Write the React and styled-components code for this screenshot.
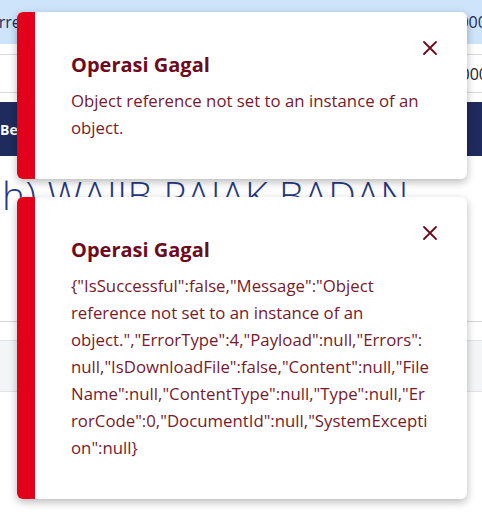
// Packages
import React from "react"
import styled, { createGlobalStyle } from "styled-components"

// Styles
const GlobalStyle = createGlobalStyle`
    html, body {
        margin: 0;
        padding: 0;
        background: #ffffff;
    }

    body {
        font-family: "Open Sans", "Noto Sans", sans-serif;
    }
`

const Page = styled.div`
    position: relative;
    width: 482px;
    height: 514px;
    overflow: hidden;
    background: #ffffff;
`

const TopBar = styled.div`
    height: 44px;
    background: #cde4fb;
    display: flex;
    justify-content: space-between;
    align-items: center;
    color: #1f2b5c;
    font-size: 16px;
    white-space: nowrap;
    overflow: hidden;

    span:first-child {
        margin-left: -21px;
    }

    span:last-child {
        margin-right: -14px;
        text-transform: uppercase;
    }
`

const FieldRow = styled.div`
    margin-top: 10px;
    height: 37px;
    border-top: 1px solid #d6dae0;
    border-bottom: 1px solid #d6dae0;
    display: flex;
    align-items: center;
    justify-content: flex-end;
    font-size: 16px;
    color: #222;
    overflow: hidden;

    span {
        margin-right: -6px;
    }
`

const NavBand = styled.div`
    margin-top: 9px;
    height: 54px;
    background: #1f2b5c;
    display: flex;
    align-items: center;
    color: #ffffff;
    font-size: 14px;
    font-weight: 700;
    white-space: nowrap;
`

const Heading = styled.h2`
    margin: 17px 0 0 2px;
    font-size: 39px;
    font-weight: 300;
    letter-spacing: 0.6px;
    line-height: 44px;
    color: #253883;
    white-space: nowrap;
`

const Divider = styled.div`
    margin-top: 104px;
    height: 1px;
    background: #d3d7dc;
`

const GrayBand = styled.div`
    margin-top: 18px;
    height: 50px;
    background: #f4f5f7;
    border-top: 1px solid #dfe2e6;
    border-bottom: 1px solid #dfe2e6;
`

const ToastStack = styled.div`
    position: absolute;
    top: 12px;
    left: 17px;
    width: 450px;
    display: flex;
    flex-direction: column;
    gap: 18px;
`

const Toast = styled.div`
    position: relative;
    display: flex;
    background: #ffffff;
    border-radius: 6px;
    overflow: hidden;
    box-shadow: 0 3px 8px rgba(0, 0, 0, 0.28);
`

const Bar = styled.div`
    flex: 0 0 18px;
    background: #e3001b;
`

const Content = styled.div`
    flex: 1;
    min-width: 0;
    padding: 40px 36px 38px 36px;
`

const Title = styled.h3`
    margin: 0;
    font-size: 20px;
    line-height: 26px;
    font-weight: 700;
    color: #6e0a1c;
`

const Message = styled.p`
    margin: 9px 0 0;
    font-size: 16.8px;
    line-height: 27px;
    color: #761a2b;
    overflow-wrap: break-word;
`

const Close = styled.button`
    position: absolute;
    top: 28px;
    right: 29px;
    width: 16px;
    height: 16px;
    padding: 0;
    border: 0;
    background: none;
    cursor: pointer;
    display: flex;
    align-items: center;
    justify-content: center;
    color: #6e0a1c;
`

const toasts = [
    "Object reference not set to an instance of an object.",
    '{"IsSuccessful":false,"Message":"Object reference not set to an instance of an object.","ErrorType":4,"Payload":null,"Errors":null,"IsDownloadFile":false,"Content":null,"FileName":null,"ContentType":null,"Type":null,"ErrorCode":0,"DocumentId":null,"SystemException":null}',
]

function CloseIcon() {
    return (
        <svg width="16" height="16" viewBox="0 0 16 16" fill="none">
            <path
                d="M2 2L14 14M14 2L2 14"
                stroke="currentColor"
                strokeWidth="1.8"
                strokeLinecap="round"
            />
        </svg>
    )
}

function App() {
    return (
        <>
            <GlobalStyle />
            <Page>
                <TopBar>
                    <span>Correction</span>
                    <span>NPWP WAJIB PAJAK BADAN 1000000</span>
                </TopBar>
                <FieldRow>
                    <span>10000000</span>
                </FieldRow>
                <NavBand>Besaran Pajak</NavBand>
                <Heading>h) WAJIB PAJAK BADAN</Heading>
                <Divider />
                <GrayBand />

                <ToastStack>
                    {toasts.map((text, i) => (
                        <Toast key={i}>
                            <Bar />
                            <Content>
                                <Title>Operasi Gagal</Title>
                                <Message>{text}</Message>
                            </Content>
                            <Close aria-label="Tutup">
                                <CloseIcon />
                            </Close>
                        </Toast>
                    ))}
                </ToastStack>
            </Page>
        </>
    )
}

export default App
